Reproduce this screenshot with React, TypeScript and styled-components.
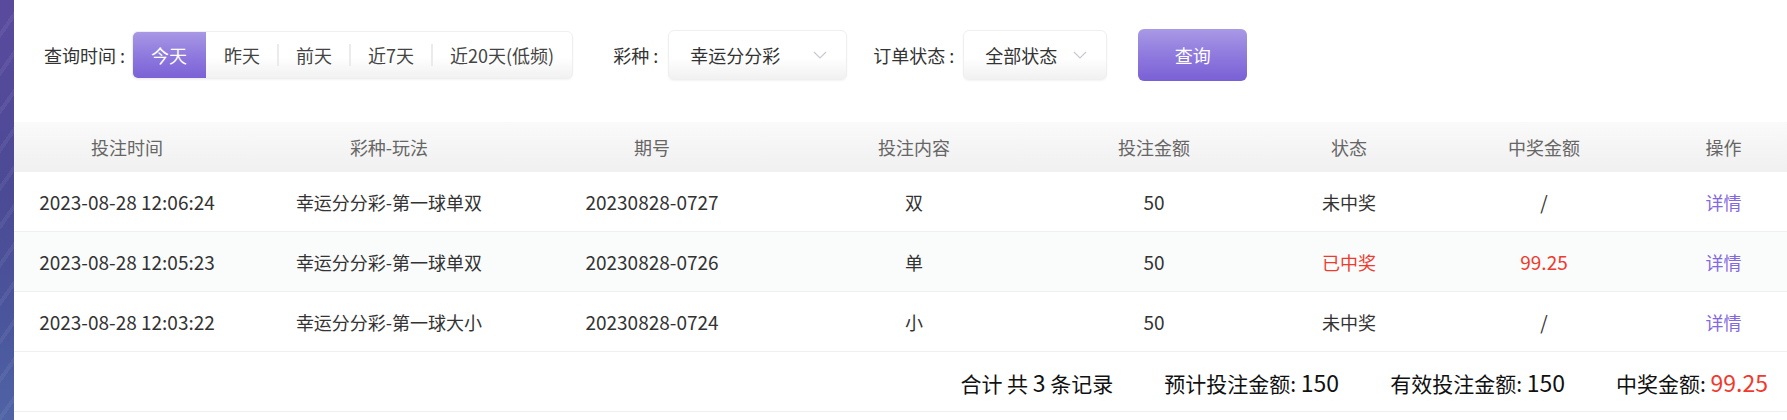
import * as React from 'react'
import styled, { createGlobalStyle, css } from 'styled-components'

const PURPLE_GRADIENT = 'linear-gradient(180deg, #a999e5 0%, #8f7ade 50%, #7a60d5 100%)'

const GlobalStyle = createGlobalStyle`
  html, body {
    margin: 0;
    padding: 0;
    background: #fff;
  }
  body {
    font-family: 'Noto Sans CJK SC', 'Noto Sans', sans-serif;
    color: #333;
  }
`

const Page = styled.div`
  display: flex;
  width: 1787px;
  height: 420px;
  overflow: hidden;
  background: #fff;
`

const SideStrip = styled.div`
  width: 14px;
  flex-shrink: 0;
  background:
    repeating-linear-gradient(125deg, rgba(255,255,255,0) 0 18px, rgba(255,255,255,0.06) 18px 22px),
    linear-gradient(180deg, #5a4a9e 0%, #4b4a95 45%, #4a559b 75%, #4f63a5 100%);
`

const Main = styled.div`
  flex: 1;
  min-width: 0;
  display: flex;
  flex-direction: column;
`

const FilterBar = styled.div`
  display: flex;
  align-items: center;
  height: 54px;
  margin-top: 28px;
  margin-bottom: 40px;
  padding-left: 30px;
`

const FilterLabel = styled.span<{ $gapLeft?: number, $gapRight?: number }>`
  font-size: 18px;
  color: #333;
  white-space: nowrap;
  margin-left: ${p => p.$gapLeft || 0}px;
  margin-right: ${p => (p.$gapRight === undefined ? 8 : p.$gapRight)}px;
`

const Segmented = styled.div`
  display: flex;
  height: 48px;
  box-sizing: border-box;
  border: 1px solid #efefef;
  border-radius: 6px;
  overflow: hidden;
  background: linear-gradient(180deg, #ffffff 55%, #f1f1f1 100%);
  box-shadow: 0 1px 2px rgba(0, 0, 0, 0.05);
`

const SegmentItem = styled.div<{ $active?: boolean, $sep?: boolean }>`
  position: relative;
  display: flex;
  align-items: center;
  padding: 0 18px;
  font-size: 18px;
  color: #444;
  white-space: nowrap;
  cursor: pointer;

  ${p => p.$active && css`
    margin: -1px 0 -1px -1px;
    padding: 0 19px 0 19px;
    color: #fff;
    background: ${PURPLE_GRADIENT};
  `}

  ${p => p.$sep && css`
    &::before {
      content: '';
      position: absolute;
      left: -1px;
      top: 12px;
      bottom: 12px;
      width: 2px;
      background: #ebebeb;
    }
  `}
`

const Select = styled.div<{ $width: number }>`
  display: flex;
  align-items: center;
  justify-content: space-between;
  width: ${p => p.$width}px;
  height: 50px;
  box-sizing: border-box;
  padding: 0 19px 0 21px;
  border: 1px solid #efefef;
  border-radius: 6px;
  background: linear-gradient(180deg, #ffffff 55%, #f1f1f1 100%);
  box-shadow: 0 1px 2px rgba(0, 0, 0, 0.05);
  font-size: 18px;
  color: #333;
  white-space: nowrap;
`

const SearchButton = styled.button`
  width: 109px;
  height: 52px;
  margin-left: 31px;
  border: none;
  border-radius: 6px;
  background: ${PURPLE_GRADIENT};
  color: #fff;
  font-family: inherit;
  font-size: 18px;
  cursor: pointer;
`

const COLUMNS = '226px 298px 228px 296px 184px 206px 184px 1fr'

const HeaderRow = styled.div`
  display: grid;
  grid-template-columns: ${COLUMNS};
  height: 50px;
  align-items: center;
  background: linear-gradient(180deg, #fafafa 0%, #f0f0f0 100%);
  font-size: 18px;
  color: #666;
`

const Row = styled.div<{ $striped?: boolean }>`
  display: grid;
  grid-template-columns: ${COLUMNS};
  height: 60px;
  box-sizing: border-box;
  align-items: center;
  border-bottom: 1px solid #efefef;
  background: ${p => (p.$striped ? '#fafcfc' : '#fff')};
  font-size: 18px;
  color: #333;
`

const Cell = styled.div<{ $tone?: 'red' | 'link', $last?: boolean }>`
  text-align: center;
  white-space: nowrap;
  padding-left: ${p => (p.$last ? 24 : 0)}px;
  color: ${p => (p.$tone === 'red' ? '#f03a2d' : p.$tone === 'link' ? '#8468e0' : 'inherit')};
  cursor: ${p => (p.$tone === 'link' ? 'pointer' : 'default')};
`

const Digits = styled.span`
  font-size: 19px;
`

const SummaryRow = styled.div`
  display: flex;
  justify-content: flex-end;
  align-items: center;
  gap: 51px;
  height: 60px;
  box-sizing: border-box;
  padding-right: 19px;
  border-bottom: 1px solid #efefef;
  font-size: 21px;
  color: #111;
`

const SummaryNum = styled.span<{ $red?: boolean }>`
  font-size: 23px;
  color: ${p => (p.$red ? '#f03a2d' : 'inherit')};
`

const Chevron = () => (
  <svg width="14" height="8" viewBox="0 0 14 8" fill="none">
    <polyline points="1,1 7,7 13,1" stroke="#c8c9d3" strokeWidth="1.2" />
  </svg>
)

interface Order {
  time: string,
  game: string,
  issue: string,
  content: string,
  amount: string,
  won: boolean,
  prize: string
}

const orders: Array<Order> = [
  { time: '2023-08-28 12:06:24', game: '幸运分分彩-第一球单双', issue: '20230828-0727', content: '双', amount: '50', won: false, prize: '/' },
  { time: '2023-08-28 12:05:23', game: '幸运分分彩-第一球单双', issue: '20230828-0726', content: '单', amount: '50', won: true, prize: '99.25' },
  { time: '2023-08-28 12:03:22', game: '幸运分分彩-第一球大小', issue: '20230828-0724', content: '小', amount: '50', won: false, prize: '/' },
]

const ranges = ['今天', '昨天', '前天', '近7天', '近20天(低频)']
const headers = ['投注时间', '彩种-玩法', '期号', '投注内容', '投注金额', '状态', '中奖金额', '操作']

export default function App() {
  const active = 0

  return (
    <>
      <GlobalStyle />
      <Page>
        <SideStrip />
        <Main>
          <FilterBar>
            <FilterLabel $gapRight={7}>查询时间 :</FilterLabel>
            <Segmented>
              {ranges.map((r, i) => (
                <SegmentItem
                  key={r}
                  $active={i === active}
                  $sep={i > 0 && i !== active && i - 1 !== active}
                >
                  {r}
                </SegmentItem>
              ))}
            </Segmented>

            <FilterLabel $gapLeft={40} $gapRight={10}>彩种 :</FilterLabel>
            <Select $width={179}>
              幸运分分彩
              <Chevron />
            </Select>

            <FilterLabel $gapLeft={26} $gapRight={9}>订单状态 :</FilterLabel>
            <Select $width={144}>
              全部状态
              <Chevron />
            </Select>

            <SearchButton>查询</SearchButton>
          </FilterBar>

          <HeaderRow>
            {headers.map((h, i) => (
              <Cell key={h} $last={i === headers.length - 1}>{h}</Cell>
            ))}
          </HeaderRow>

          {orders.map((o, i) => (
            <Row key={o.issue} $striped={i % 2 === 1}>
              <Cell><Digits>{o.time}</Digits></Cell>
              <Cell>{o.game}</Cell>
              <Cell><Digits>{o.issue}</Digits></Cell>
              <Cell>{o.content}</Cell>
              <Cell><Digits>{o.amount}</Digits></Cell>
              <Cell $tone={o.won ? 'red' : undefined}>{o.won ? '已中奖' : '未中奖'}</Cell>
              <Cell $tone={o.won ? 'red' : undefined}><Digits>{o.prize}</Digits></Cell>
              <Cell $tone="link" $last>详情</Cell>
            </Row>
          ))}

          <SummaryRow>
            <span>合计 共 <SummaryNum>3</SummaryNum> 条记录</span>
            <span>预计投注金额: <SummaryNum>150</SummaryNum></span>
            <span>有效投注金额: <SummaryNum>150</SummaryNum></span>
            <span>中奖金额: <SummaryNum $red>99.25</SummaryNum></span>
          </SummaryRow>
        </Main>
      </Page>
    </>
  )
}
